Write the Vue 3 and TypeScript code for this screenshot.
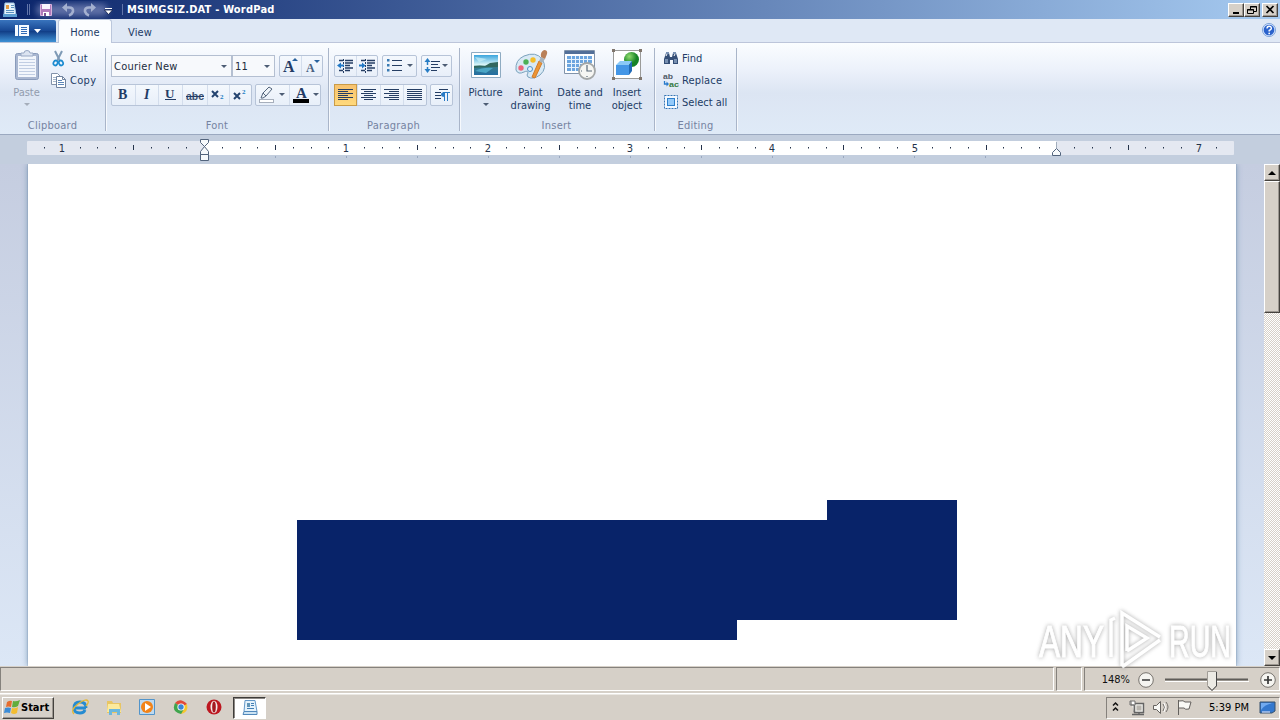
<script setup lang="ts">
interface Tick { x: number; kind: 'dot' | 'half' | 'number'; label?: string }

const ORIGIN = 204
const INCH = 142.1
const ticks: Tick[] = []
for (let i = -9; i <= 57; i++) {
  const x = Math.round(ORIGIN + (i * INCH) / 8)
  if (i === 0 || i === 48) continue
  if (i % 8 === 0) ticks.push({ x, kind: 'number', label: String(Math.abs(i / 8)) })
  else if (i % 4 === 0) ticks.push({ x, kind: 'half' })
  else ticks.push({ x, kind: 'dot' })
}
const tabStops: number[] = []
for (let i = 1; i < 12; i++) tabStops.push(ORIGIN + i * 71)

const alignments = [
  { name: 'left', lines: [[0, 15], [0, 10], [0, 15], [0, 10], [0, 15], [0, 10]] },
  { name: 'center', lines: [[0, 15], [3, 9], [0, 15], [3, 9], [0, 15], [3, 9]] },
  { name: 'right', lines: [[0, 15], [5, 10], [0, 15], [5, 10], [0, 15], [5, 10]] },
  { name: 'justify', lines: [[0, 15], [0, 15], [0, 15], [0, 15], [0, 15], [0, 15]] },
]
</script>

<template>
  <div class="window">
    <header class="titlebar">
      <svg class="quick" width="124" height="18" viewBox="0 0 124 18">
        <defs><filter id="haze" x="-20%" y="-50%" width="140%" height="200%"><feGaussianBlur stdDeviation="3" /></filter></defs>
        <path d="M5 2h9l2 12H4z" fill="#e5f2fb" stroke="#a9cbe5" />
        <path d="M3 13h14v3H3z" fill="#5c9dd0" />
        <rect x="6" y="4" width="3" height="4" fill="#e39b43" />
        <path d="M11 4.500h3M11 6.500h3M6 9.500h8M6 11.500h8" stroke="#5b91be" />
        <path d="M27.500 3v11M29.500 3v11M122.500 3v11" stroke="#6275aa" />
        <rect x="36" y="3" width="72" height="12" rx="6" fill="#8793c2" opacity=".65" filter="url(#haze)" />
        <path d="M40.500 3.500h11v11h-11z" fill="#b17abb" stroke="#d9b3dc" />
        <path d="M42 3h8v5h-8z" fill="#faf5fd" /><path d="M43 11h6v4h-6z" fill="#fff" /><path d="M44 12h2v3h-2z" fill="#7b5391" />
        <path d="M66 6.500h3q4.500 0 4 4q-1 3-4 4" fill="none" stroke="#a4b0d0" stroke-width="2.600" /><path d="M62 6.500l5-4.500v9z" fill="#a4b0d0" />
        <path d="M92 6.500h-3q-4.500 0-4 4q1 3 4 4" fill="none" stroke="#a4b0d0" stroke-width="2.600" /><path d="M96 6.500l-5-4.500v9z" fill="#a4b0d0" />
        <path d="M105 7.500h7" stroke="#fff" /><path d="M104.500 9h8l-4 4.500z" fill="#fff" stroke="#081844" stroke-width=".8" />
      </svg>
      <h1>MSIMGSIZ.DAT - WordPad</h1>
      <div class="window-buttons">
        <button><svg width="14" height="12"><path d="M4 9h6" stroke="#000" stroke-width="2" /></svg></button>
        <button><svg width="14" height="12"><path d="M5.500 5V2.500h6v5H9M5 3h7M2.500 5.500h6v4h-6zM2 6h7" fill="none" stroke="#000" /></svg></button>
        <button class="close"><svg width="14" height="12"><path d="M3.500 2l7 7M10.500 2l-7 7" stroke="#000" stroke-width="1.700" /></svg></button>
      </div>
    </header>

    <nav class="tabs">
      <button class="app-menu">
        <svg width="56" height="22" viewBox="0 0 56 22">
          <rect x="15" y="5" width="14" height="11" fill="#f6fbff" /><path d="M18.500 5v11" stroke="#326cb7" />
          <path d="M21 7.500h6M21 9.500h6M21 11.500h6M21 13.500h6" stroke="#326cb7" /><path d="M34 9h7l-3.500 4z" fill="#fff" />
        </svg>
      </button>
      <span class="tab selected">Home</span>
      <span class="tab">View</span>
      <svg class="help" width="16" height="16" viewBox="0 0 16 16">
        <circle cx="8" cy="8" r="6.600" fill="#cfe0fb" stroke="#86a9dc" /><circle cx="8" cy="8" r="5.300" fill="#2a62cc" />
        <path d="M6 6.500q0-2.200 2.200-2.200t2.200 1.900q0 1.400-2.200 2.200v1" fill="none" stroke="#fff" stroke-width="1.400" /><circle cx="8.200" cy="11.400" r=".9" fill="#fff" />
      </svg>
    </nav>

    <section class="ribbon">
      <div class="group clipboard">
        <div class="body">
          <div class="paste">
            <svg width="26" height="34" viewBox="0 0 26 34">
              <rect x="1.500" y="3.500" width="23" height="26" rx="2" fill="#a9b7d1" stroke="#899bbb" />
              <path d="M4 6h18v21H4z" fill="#f2f6fc" /><path d="M5 9.500h16M5 12.500h16M5 15.500h16M5 18.500h16M5 21.500h16M5 24.500h16" stroke="#c1cee3" />
              <path d="M7 6V3h3q0-2.500 3-2.500t3 2.500h3v3z" fill="#dce4f1" stroke="#98a8c4" />
            </svg>
            <span>Paste</span><i class="arrow muted" />
          </div>
          <div class="cut-copy">
            <div class="command"><svg width="17" height="17" viewBox="0 0 17 17"><path d="M5 1l5 10M12 1L7 11" stroke="#7e9ab6" stroke-width="2" /><ellipse cx="5.500" cy="13" rx="2" ry="2.500" transform="rotate(25 5.500 13)" fill="none" stroke="#1c8bd0" stroke-width="1.700" /><ellipse cx="11" cy="13" rx="2" ry="2.500" transform="rotate(-25 11 13)" fill="none" stroke="#1c8bd0" stroke-width="1.700" /></svg><span class="copy-label">Cut</span></div>
            <div class="command"><svg width="17" height="17" viewBox="0 0 17 17"><path d="M1.500 1.500h6l3 3v8h-9z" fill="#fff" stroke="#8392a9" /><path d="M3 5.500h4M3 7.500h4M3 9.500h4" stroke="#a8b8cb" /><path d="M6.500 4.500h6l3 3v8h-9z" fill="#fff" stroke="#70839f" /><path d="M12.500 4.500v3h3" fill="none" stroke="#70839f" /><path d="M8 8.500h4M8 10.500h6M8 12.500h6" stroke="#5d86b7" /></svg><span class="copy-label">Copy</span></div>
          </div>
        </div>
        <footer>Clipboard</footer>
      </div>

      <div class="group font">
        <div class="body rows">
          <div class="tool-row">
            <div class="combo family"><span>Courier New</span><i class="arrow" /></div>
            <div class="combo size"><span>11</span><i class="arrow" /></div>
            <div class="buttons grow">
              <svg width="21" height="20"><text x="3" y="16" class="serif" font-size="16">A</text><path d="M12 5l3-3 3 3z" fill="#28629d" /></svg>
              <svg width="21" height="20"><text x="4" y="16" class="serif small-a" font-size="12">A</text><path d="M12 4h6l-3 3z" fill="#28629d" /></svg>
            </div>
          </div>
          <div class="tool-row tight">
            <div class="buttons styles">
              <svg width="23" height="20"><text x="6" y="14" class="serif" font-size="14">B</text></svg>
              <svg width="23" height="20"><text x="8" y="14" class="serif italic" font-size="14">I</text></svg>
              <svg width="24" height="20"><text x="6" y="12.500" class="serif" font-size="13">U</text><path d="M6 14.500h11" stroke="#233c66" /></svg>
              <svg width="25" height="20"><text x="3" y="15" class="abc" font-size="11" textLength="18" lengthAdjust="spacingAndGlyphs">abc</text><path d="M3 11.500h18" stroke="#233c66" /></svg>
              <svg width="22" height="20"><path d="M4 6l6 6M10 6l-6 6" stroke="#24436f" stroke-width="2" /><text x="12" y="14" class="serif two" font-size="7">2</text></svg>
              <svg width="22" height="20"><path d="M4 8l6 6M10 8l-6 6" stroke="#24436f" stroke-width="2" /><text x="12" y="9" class="serif two" font-size="7">2</text></svg>
            </div>
            <div class="buttons colors">
              <svg width="33" height="20"><path d="M5 13l2-5 6-6 3 2-6 7-3 2z" fill="#eef3f8" stroke="#53647c" /><path d="M7 8l3 3" stroke="#53647c" /><rect x="3.500" y="14.500" width="14" height="3" fill="#fff" stroke="#a7afbc" /><path d="M23 8h6l-3 3z" fill="#4d5d74" /></svg>
              <svg width="31" height="20"><text x="6" y="13" class="serif" font-size="15">A</text><path d="M3 14h16v4H3z" fill="#000" /><path d="M23 8h6l-3 3z" fill="#4d5d74" /></svg>
            </div>
          </div>
        </div>
        <footer>Font</footer>
      </div>

      <div class="group paragraph">
        <div class="body rows">
          <div class="tool-row">
            <div class="buttons">
              <svg v-for="d in 2" :key="d" width="21" height="20">
                <path d="M4 4.500h4M10 4.500h8M10 7h8M10 9.500h5M10 12h8M4 14.500h4M10 14.500h5" class="ink bold" /><path d="M8.500 3v14" class="ink" stroke-dasharray="2 1" />
                <path v-if="d === 1" d="M2 9.500l4-3v2h3v2H6v2z" fill="#2278c6" /><path v-else d="M8.500 9.500l-3.500-3v2H2v2h3v2z" fill="#2278c6" />
              </svg>
            </div>
            <div class="buttons">
              <svg width="33" height="20"><path d="M9 4.500h10M9 9.500h10M9 14.500h10" class="ink" /><path d="M4 3h2.500v2.500H4zM4 8h2.500v2.500H4zM4 13h2.500v2.500H4z" fill="#397bb3" /><path d="M24 8h6l-3 3z" fill="#4d5d74" /></svg>
            </div>
            <div class="buttons">
              <svg width="29" height="20"><path d="M9 5.500h9M9 8.500h7M9 11.500h9M9 14.500h6" class="ink" /><path d="M5.500 5v10" stroke="#267cc4" stroke-width="1.500" stroke-dasharray="4 2" /><path d="M2.500 6l3-4 3 4zM2.500 13l3 4 3-4z" fill="#267cc4" /><path d="M20 8h6l-3 3z" fill="#4d5d74" /></svg>
            </div>
          </div>
          <div class="tool-row tight">
            <div class="buttons aligns">
              <svg v-for="(a, n) in alignments" :key="a.name" width="23" height="20" :class="{ chosen: n === 0 }"><path v-for="(l, j) in a.lines" :key="j" :d="`M${3 + l[0]} ${4.5 + j * 2}h${l[1]}`" class="ink" /></svg>
            </div>
            <div class="buttons mark">
              <svg width="21" height="20"><path d="M8 4.500h9M4 7.500h6M4 10.500h6M4 13.500h6" class="ink" /><path d="M13.500 7v9M16.500 7v9M12 7.500h7" stroke="#297ac4" /><path d="M14 7q-4 0-4 2.500T14 12z" fill="#297ac4" /></svg>
            </div>
          </div>
        </div>
        <footer>Paragraph</footer>
      </div>

      <div class="group insert">
        <div class="body">
          <div class="big picture">
            <svg width="32" height="32" viewBox="0 0 32 32">
              <defs><linearGradient id="sky" x2="0" y2="1"><stop stop-color="#3ba5dd" /><stop offset=".5" stop-color="#def8f8" /><stop offset=".6" stop-color="#367d8e" /><stop offset="1" stop-color="#256fa3" /></linearGradient></defs>
              <path d="M1.500 3.500h29v25h-29z" fill="#fff" stroke="#8eabc2" /><path d="M4 6h24v20H4z" fill="url(#sky)" /><path d="M4 17q6-1 11 0l5-3 8-1v5q-15 0-24 1z" fill="#31685e" /><path d="M5 8l12 2-8 3z" fill="#c9eff6" opacity=".7" /><path d="M5 22q8-4 18-3l-7 5z" fill="#57bad8" opacity=".7" />
            </svg>
            <span>Picture</span><i class="arrow" />
          </div>
          <div class="big paint">
            <svg width="34" height="32" viewBox="0 0 34 32">
              <path d="M2 21Q1 11 10 7q12-5 18 3 6 9-2 16-7 5-12 2-2-2 0-4 0-3-4-1-6 3-8-2z" fill="#d8e9f5" stroke="#7ba2bd" />
              <circle cx="7" cy="19" r="2.700" fill="#ed657b" /><circle cx="12" cy="13" r="2.700" fill="#4caf56" /><circle cx="19" cy="11" r="2.700" fill="#f4bd29" /><circle cx="16" cy="20" r="2.500" fill="#e4f0fb" stroke="#4c91c8" /><path d="M25 12l3 2-7 15-3-1z" fill="#ed9634" stroke="#cf7b2c" /><path d="M25 12l2-4 4 2-3 4z" fill="#a7b3bd" /><path d="M27 8q-1-5 3-7 4 0 3 4l-2 5z" fill="#b98059" />
            </svg>
            <span>Paint<br>drawing</span>
          </div>
          <div class="big date">
            <svg width="32" height="32" viewBox="0 0 32 32">
              <path d="M.5 1.500h30v23H.5z" fill="#fff" stroke="#8193aa" /><path d="M1 2h29v3H1z" fill="#526f98" />
              <path d="M3 7h25v15H3z" fill="#6ca5df" /><path d="M3 10.500h25M3 14.500h25M3 18.500h25M7.500 7v15M11.500 7v15M15.500 7v15M19.500 7v15M23.500 7v15" stroke="#e7f3fd" />
              <circle cx="23" cy="22" r="8" fill="#f6f6f3" stroke="#a4a7a7" stroke-width="1.800" /><path d="M23 16v6h5M17 22h1M23 28v-1" fill="none" stroke="#596979" stroke-width="1.200" />
            </svg>
            <span>Date and<br>time</span>
          </div>
          <div class="big object">
            <svg width="32" height="32" viewBox="0 0 32 32">
              <defs><radialGradient id="ball" cx=".35" cy=".3"><stop stop-color="#90dc6e" /><stop offset="1" stop-color="#168226" /></radialGradient></defs>
              <path d="M2.500 1.500h27v28h-27z" fill="#fff" stroke="#9b9b99" /><circle cx="20.500" cy="10.500" r="7.500" fill="url(#ball)" /><path d="M5 16l4-4h12l-3 4z" fill="#8ac9f7" /><path d="M5 16h13v10H5z" fill="#4496e6" /><path d="M18 16l3-4v10l-3 4z" fill="#216ab7" /><path d="M1 0h3v3H1zM28 0h3v3h-3zM1 28h3v3H1zM28 28h3v3h-3z" fill="#80766d" />
            </svg>
            <span>Insert<br>object</span>
          </div>
        </div>
        <footer>Insert</footer>
      </div>

      <div class="group editing">
        <div class="body commands">
          <div class="command"><svg width="16" height="16"><path d="M1 9l2-6h3l1 4h2l1-4h3l2 6v5h-5v-4H7v4H1z" fill="#344e76" /><path d="M3 2h3v2H3zM10 2h3v2h-3zM2 9h3v4H2zM11 9h3v4h-3z" fill="#7890b2" /><path d="M3 6l1-2M11 6l1-2" stroke="#fff" /></svg><span>Find</span></div>
          <div class="command"><svg width="16" height="16"><text x="0" y="7" class="mini" fill="#505a68" textLength="10" lengthAdjust="spacingAndGlyphs">ab</text><text x="6" y="15" class="mini" fill="#357a42" textLength="10" lengthAdjust="spacingAndGlyphs">ac</text><path d="M1.500 9v3h3" fill="none" stroke="#297acb" stroke-width="1.300" /><path d="M3.500 9.500L6 12l-2.500 2.500z" fill="#297acb" /></svg><span class="replace-label">Replace</span></div>
          <div class="command"><svg width="16" height="16"><rect x="1.500" y="1.500" width="13" height="13" fill="#f4f9ff" stroke="#3675b4" stroke-dasharray="2 1" /><rect x="4.500" y="4.500" width="7" height="7" fill="#94cafa" stroke="#2d7fcb" /></svg><span>Select all</span></div>
        </div>
        <footer>Editing</footer>
      </div>
    </section>

    <svg class="ruler" width="1280" height="29" viewBox="0 0 1280 29">
      <rect x="27" y="6" width="1207" height="14" rx="1" fill="#e4e8f1" /><rect x="204" y="6" width="852" height="14" fill="#fff" />
      <g v-for="t in ticks" :key="t.x">
        <text v-if="t.kind === 'number'" :x="t.x" y="17" text-anchor="middle" font-size="11">{{ t.label }}</text>
        <rect v-else :x="t.x" :y="t.kind === 'half' ? 10 : 12" width="1" :height="t.kind === 'half' ? 5 : 1.500" fill="#25334a" />
      </g>
      <path v-for="x in tabStops" :key="x" :d="`M${x + .5} 21v2`" stroke="#9aa8bf" />
      <g fill="#f7fafc" stroke="#52647d"><path d="M200.500 4.500h8v3l-4 4-4-4zM200.500 19.500v-3l4-5 4 5v3zM200.500 19.500h8v6h-8zM1052.500 20.500v-3l4-4 4 4v3z" /><path d="M1056.500 7v6" stroke="#a2aebc" /></g>
    </svg>

    <main class="workspace">
      <div class="page">
        <svg width="1208" height="502" viewBox="28 164 1208 502"><path d="M827 500h130v120H737v20H297V520h530z" fill="#082369" /></svg>
      </div>
      <div class="scrollbar">
        <button><svg width="14" height="14"><path d="M3 9l4-4 4 4z" /></svg></button><div class="thumb" /><div class="trough" />
        <button><svg width="14" height="14"><path d="M3 5l4 4 4-4z" /></svg></button>
      </div>
    </main>

    <div class="status">
      <div class="pane main-pane" /><div class="pane small-pane" />
      <div class="pane zoom-pane"><span>148%</span>
        <svg width="144" height="25" viewBox="1135 667 144 25">
          <g fill="#f5f4f0" stroke="#77736e"><circle cx="1146" cy="680" r="7.300" /><circle cx="1268" cy="680" r="7.300" /></g>
          <path d="M1142 680h8M1264 680h8M1268 676v8" stroke="#373737" stroke-width="1.700" /><path d="M1165 679.500h83" stroke="#5f5c58" stroke-width="2" /><path d="M1165 681.500h84" stroke="#fff" />
          <path d="M1207.500 671.500h9v14l-4.500 5-4.500-5z" fill="#eceae4" stroke="#a19d97" /><path d="M1216.500 672v14l-4.500 4.500-4-4" fill="none" stroke="#484848" />
        </svg>
      </div>
    </div>

    <footer class="taskbar">
      <button class="start"><svg width="17" height="17" viewBox="0 0 17 17"><path d="M3 3q3-2 5-1L7 8q-3-1-5 0z" fill="#e66d2f" /><path d="M9 2q3 1 7-1l-2 6q-3 2-6 1z" fill="#61ad3c" /><path d="M1 9q3-1 6 0l-1 5q-3-1-6 0z" fill="#3c8cd7" /><path d="M8 9q3 1 6-1l-1 6q-3 2-6 0z" fill="#f3bd31" /></svg><span>Start</span></button>
      <div class="launchers">
        <svg width="18" height="18" viewBox="0 0 18 18"><path d="M15 10H4M15 10q0-6-6-6t-6 6q0 5 6 5 4 0 5-3" fill="none" stroke="#258bd1" stroke-width="2.800" /><path d="M3 16Q-1 12 7 6q8-6 10-3 1 2-2 5" fill="none" stroke="#e6b834" stroke-width="1.300" /></svg>
        <svg width="18" height="18" viewBox="0 0 18 18"><path d="M2 5V3h5l1 2h8v10H2z" fill="#e8c563" /><path d="M3 6h11l2 8H2z" fill="#fbea9d" /><path d="M4 17v-6h11v6h-3v-3H7v3z" fill="#6bb7dd" /></svg>
        <svg width="18" height="18" viewBox="0 0 18 18"><path d="M1.500 1.500h15v15h-15z" fill="#bed9ef" stroke="#5294ca" /><circle cx="9" cy="9" r="6" fill="#f28318" /><path d="M7 5l6 4-6 4z" fill="#fff" /></svg>
        <svg width="18" height="18" viewBox="0 0 18 18"><path d="M9 9L3 5Q8-1 15 6L12 9z" fill="#e14a3a" /><path d="M9 9l6-3q2 8-6 10z" fill="#f5c62f" /><path d="M9 9L3 5q-4 9 6 11l3-5z" fill="#40a54d" /><circle cx="9" cy="9" r="3.600" fill="#fff" /><circle cx="9" cy="9" r="2.700" fill="#3986d7" /></svg>
        <svg width="18" height="18" viewBox="0 0 18 18"><circle cx="9" cy="9" r="7.500" fill="#bd1720" /><ellipse cx="9" cy="9" rx="3.500" ry="6.200" fill="#f4eaea" /><ellipse cx="9" cy="9" rx="1.800" ry="5.500" fill="#a41820" /></svg>
      </div>
      <div class="running"><svg width="18" height="18" viewBox="0 0 18 18"><path d="M4 1.500h10l2 11H3z" fill="#e5f2fb" stroke="#6498c8" /><path d="M3 12.500h13v3H2z" fill="#cce3f3" stroke="#5188bb" /><path d="M6 4h3v4H6z" fill="#6295b8" /><path d="M10 4.500h3M10 6.500h3M6 9.500h7" stroke="#437fb5" /></svg></div>
      <div class="tray">
        <svg width="96" height="20" viewBox="1107 697 96 20">
          <path d="M1113 704.500l2.500-2.500 2.500 2.500M1113 709.500l2.500-2.500 2.500 2.500" fill="none" stroke="#111" stroke-width="1.500" />
          <path d="M1134.500 702.500h9v9h-9zM1132 713.500h12M1139 711v3" fill="#efefeb" stroke="#646464" stroke-width="1.400" /><path d="M1136.500 704.500h5v5h-5z" fill="#b8b5af" /><path d="M1131 700v4h3v7M1130 700h5v4h-5z" fill="#fff" stroke="#707070" />
          <path d="M1153.500 704.500h3l4-4v12l-4-4h-3z" fill="#f8f8f5" stroke="#65625f" /><path d="M1163 703q3 3 0 7M1166 701q4 5 0 10" fill="none" stroke="#74716d" /><path d="M1164 702q3 4 0 9" fill="none" stroke="#fff" />
          <path d="M1178.500 699v15M1179 700q5-1 6 1h6l-2 7q-4 1-5-1h-5" fill="#f9f9f5" stroke="#64615e" />
        </svg>
        <time>5:39 PM</time>
        <svg width="17" height="18" viewBox="0 0 17 18"><path d="M1 3h15v9l-3 2H1z" fill="#3478ce" stroke="#36516d" /><path d="M2 4h12q-8 1-12 7z" fill="#71aaf0" /><path d="M3 13h8" stroke="#eef" /></svg>
      </div>
    </footer>

    <svg class="watermark" width="240" height="74" viewBox="1030 603 240 74">
      <g class="brand"><text x="1039" y="657" textLength="65" lengthAdjust="spacingAndGlyphs">ANY</text><text x="1169" y="657" textLength="62" lengthAdjust="spacingAndGlyphs">RUN</text><path d="M1111 657v-37l4-2M1122 666v-53l38 24M1122 667l38-27M1127 651v-25l20 12-20 13" fill="none" /></g>
    </svg>
  </div>
</template>

<style>
body { margin: 0; overflow: hidden; }
</style>

<style scoped>
* { box-sizing: border-box; }
.window { position: relative; width: 1280px; height: 720px; overflow: hidden; display: flex; flex-direction: column; background: #d6d0c8; color: #223c66; font: 11px "DejaVu Sans Condensed", "DejaVu Sans", sans-serif; }
svg { display: block; flex: none; }
button { padding: 0; border: 0; font: inherit; }
.titlebar { height: 19px; flex: none; display: flex; align-items: center; background: linear-gradient(90deg, #0a246a, #a6caf0); }
h1 { margin: 0 0 0 3px; font: bold 11px "DejaVu Sans Condensed", sans-serif; color: #fff; white-space: nowrap; letter-spacing: .2px; }
.window-buttons { margin-left: auto; display: flex; margin-right: 2px; }
.window-buttons button, .scrollbar button, .thumb, .start { background: #d6d0c8; border: 1px solid; border-color: #fff #45423e #45423e #fff; box-shadow: inset -1px -1px #9c9791; }
.window-buttons button { width: 16px; height: 14px; }
.window-buttons .close { margin-left: 2px; }
.tabs { height: 24px; flex: none; display: flex; align-items: flex-end; background: #dfe8f5; border-bottom: 1px solid #bcc5da; }
.app-menu { width: 56px; height: 22px; align-self: flex-start; margin-top: 1px; background: linear-gradient(#3974bd, #174793 49%, #123f88 52%, #3d91d5); border-radius: 0 2px 0 0; }
.tab { height: 23px; margin-left: 1px; text-align: center; width: 54px; letter-spacing: .1px; line-height: 27px; }
.tab.selected { margin-left: 2px; background: #fbfdff; border: 1px solid #bbc7dc; border-bottom: 0; border-radius: 3px 3px 0 0; margin-bottom: -1px; height: 24px; line-height: 26px; }
.help { margin: 0 3px 4px auto; }
.ribbon { height: 92px; flex: none; display: flex; background: linear-gradient(#fafdff 0, #edf2fb 28%, #dce5f3 55%, #dfeaf7); border-bottom: 1px solid #9ba9c0; }
.group { height: 83px; margin-top: 5px; display: flex; flex-direction: column; border-right: 1px solid #a9b5c9; box-shadow: 1px 0 #f6f9fd; }
.clipboard { width: 106px; } .font { width: 223px; } .paragraph { width: 131px; } .insert { width: 195px; } .editing { width: 82px; }
.body { height: 69px; display: flex; flex: none; }
.group > footer { height: 14px; line-height: 17px; text-align: center; color: #7583a1; letter-spacing: .25px; }
.insert > footer, .paragraph > footer { padding-right: 1px; }
.paste { width: 52px; display: flex; flex-direction: column; align-items: center; padding-left: 1px; color: #929cae; }
.paste svg { margin-top: 2px; } .paste span { line-height: 13px; margin-top: 2px; }
.arrow { width: 0; height: 0; border: 3px solid transparent; border-top-color: #4d5d74; border-bottom: 0; }
.muted { border-top-color: #a5adba; margin-top: 4px; }
.cut-copy { margin-top: -1px; margin-left: -2px; }
.command { height: 22px; display: flex; align-items: center; gap: 3px; white-space: nowrap; }
.copy-label { letter-spacing: .3px; } .replace-label { letter-spacing: .15px; }
.rows { flex-direction: column; gap: 7px; padding: 7px 0 0 5px; }
.tool-row { display: flex; height: 22px; gap: 4px; }
.combo { height: 22px; border: 1px solid #b4bfd1; display: flex; justify-content: space-between; align-items: center; padding: 0 4px 0 2px; background: #f7f9fc; color: #222c3c; letter-spacing: .25px; }
.family { width: 121px; } .size { width: 43px; margin-left: -4px; }
.buttons { height: 22px; display: flex; border: 1px solid #b7c4d8; border-radius: 2px; background: linear-gradient(#f4f8fd, #e8eff9); }
.buttons svg + svg { border-left: 1px solid #d3ddec; }
.serif { font-family: "Liberation Serif", serif; font-weight: bold; fill: #233c66; }
.small-a { fill: #486080; } .two { fill: #197cc3; }
.italic { font-style: italic; } .abc { font-family: "Liberation Sans", sans-serif; font-weight: bold; fill: #3d5274; }
.mini { font: bold 8px "Liberation Sans", sans-serif; }
.tight { gap: 3px; }
.ink { stroke: #253e64; fill: none; stroke-width: 1; } .bold { stroke-width: 1.5; }
.aligns .chosen { width: 23px; height: 22px; margin: -1px 0 -1px -1px; background: linear-gradient(#f7c26f, #ffd97c); border: 1px solid #c99b48; }
.big { display: flex; flex-direction: column; align-items: center; text-align: center; line-height: 13px; padding-top: 1px; white-space: nowrap; }
.big span { margin-top: 5px; } .big .arrow { margin-top: 4px; }
.picture { width: 51px; } .paint { width: 39px; } .date { width: 60px; } .object { width: 34px; }
.commands { flex-direction: column; padding: 0 0 0 8px; margin-top: -1px; height: 70px; }
.ruler { background: #c3cede; fill: #25334a; }
.workspace { height: 502px; flex: none; display: flex; background: linear-gradient(#c5cde0, #dce7f6); }
.page { width: 1208px; height: 502px; margin-left: 28px; background: #fff; box-shadow: 0 0 6px #7795b4, 0 0 1px #5d7187; clip-path: inset(0 -8px 0 -8px); }
.scrollbar { width: 16px; margin-left: auto; display: flex; flex-direction: column; background: #e9e6e1; }
.scrollbar button { width: 16px; height: 17px; } .thumb { height: 132px; } .trough { flex: 1; background: repeating-conic-gradient(#fff 0 25%, #d6d0c8 0 50%) 0 0 / 2px 2px; }
.status { height: 28px; flex: none; display: flex; gap: 2px; border-top: 1px solid #d6d0c8; padding-bottom: 2px; border-bottom: 1px solid #fff; }
.pane { border: 1px solid; border-color: #85817c #fff #fff #85817c; }
.main-pane { width: 1054px; } .small-pane { width: 26px; } .zoom-pane { flex: 1; display: flex; align-items: center; justify-content: flex-end; color: #111; gap: 5px; }
.taskbar { height: 26px; flex: none; display: flex; align-items: center; border-top: 1px solid #ebe8e3; background: #d6d0c8; color: #000; }
.start { width: 52px; height: 22px; margin-left: 2px; display: flex; align-items: center; font-weight: bold; padding-left: 1px; color: #000; }
.launchers { display: flex; gap: 15.5px; margin-left: 17px; }
.launchers svg { margin-top: -1px; }
.running { width: 33px; height: 22px; margin-left: 10px; background: #fff; border: 1px solid; border-color: #3e3c39 #fff #fff #3e3c39; box-shadow: inset 1px 1px #8c8884; display: grid; place-items: center; }
.tray { margin-left: auto; width: 174px; height: 22px; display: flex; align-items: center; border: 1px solid; border-color: #85817c #fff #fff #85817c; }
.tray time { width: 50px; text-align: center; margin: 0 5px 0 1px; white-space: nowrap; }
.watermark { position: absolute; left: 1030px; top: 603px; opacity: .85; }
.brand { filter: drop-shadow(0 0 2px #999); stroke: #fff; stroke-width: 3.5; }
.brand text { font: 45px "Liberation Sans", sans-serif; fill: #fff; stroke-width: 1; }
</style>
